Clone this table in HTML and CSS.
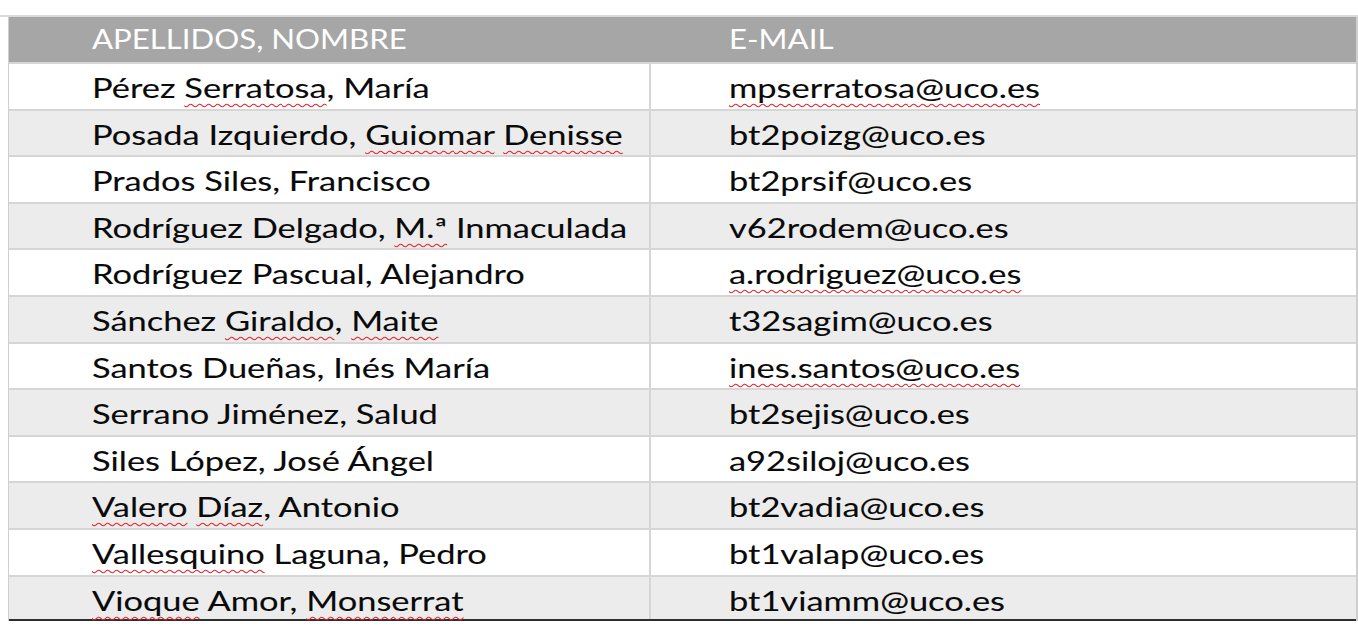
FILE: index.html
```html
<!DOCTYPE html>
<html lang="es">
<head>
<meta charset="utf-8">
<title>Listado</title>
<link rel="stylesheet" href="styles.css">
</head>
<body>
<div class="sheet">
  <div class="table">
    <div class="row head">
      <div class="cell name"><span class="txt">APELLIDOS, NOMBRE</span></div>
      <div class="cell mail"><span class="txt">E-MAIL</span></div>
    </div>
    <div class="row">
      <div class="cell name"><span class="txt">Pérez <span class="sp">Serratosa</span>, María</span></div>
      <div class="cell mail"><span class="txt"><span class="sp">mpserratosa@uco.es</span></span></div>
    </div>
    <div class="row alt">
      <div class="cell name"><span class="txt">Posada Izquierdo, <span class="sp">Guiomar</span> <span class="sp">Denisse</span></span></div>
      <div class="cell mail"><span class="txt">bt2poizg@uco.es</span></div>
    </div>
    <div class="row">
      <div class="cell name"><span class="txt">Prados Siles, Francisco</span></div>
      <div class="cell mail"><span class="txt">bt2prsif@uco.es</span></div>
    </div>
    <div class="row alt">
      <div class="cell name"><span class="txt">Rodríguez Delgado, <span class="sp">M.ª</span> Inmaculada</span></div>
      <div class="cell mail"><span class="txt">v62rodem@uco.es</span></div>
    </div>
    <div class="row">
      <div class="cell name"><span class="txt">Rodríguez Pascual, Alejandro</span></div>
      <div class="cell mail"><span class="txt"><span class="sp">a.rodriguez@uco.es</span></span></div>
    </div>
    <div class="row alt">
      <div class="cell name"><span class="txt">Sánchez <span class="sp">Giraldo</span>, <span class="sp">Maite</span></span></div>
      <div class="cell mail"><span class="txt">t32sagim@uco.es</span></div>
    </div>
    <div class="row">
      <div class="cell name"><span class="txt">Santos Dueñas, Inés María</span></div>
      <div class="cell mail"><span class="txt"><span class="sp">ines.santos@uco.es</span></span></div>
    </div>
    <div class="row alt">
      <div class="cell name"><span class="txt">Serrano Jiménez, Salud</span></div>
      <div class="cell mail"><span class="txt">bt2sejis@uco.es</span></div>
    </div>
    <div class="row">
      <div class="cell name"><span class="txt">Siles López, José Ángel</span></div>
      <div class="cell mail"><span class="txt">a92siloj@uco.es</span></div>
    </div>
    <div class="row alt">
      <div class="cell name"><span class="txt"><span class="sp">Valero</span> <span class="sp">Díaz</span>, Antonio</span></div>
      <div class="cell mail"><span class="txt">bt2vadia@uco.es</span></div>
    </div>
    <div class="row">
      <div class="cell name"><span class="txt"><span class="sp">Vallesquino</span> Laguna, Pedro</span></div>
      <div class="cell mail"><span class="txt">bt1valap@uco.es</span></div>
    </div>
    <div class="row alt last">
      <div class="cell name"><span class="txt"><span class="sp">Vioque</span> Amor, <span class="sp">Monserrat</span></span></div>
      <div class="cell mail"><span class="txt">bt1viamm@uco.es</span></div>
    </div>
  </div>
</div>
</body>
</html>
```

FILE: styles.css
```css
html, body {
  margin: 0;
  padding: 0;
  background: #ffffff;
}

body {
  font-family: Lato, "Liberation Sans", sans-serif;
  font-size: 27px;
  color: #0a0a0a;
}

.sheet {
  margin-top: 15px;
  border-top: 2px solid #d9d9d9;
}

.table {
  margin-left: 8px;
  width: 1350px;
  border-left: 1px solid #cfcfcf;
  border-right: 2px solid #cfcfcf;
  box-sizing: border-box;
  display: grid;
  grid-template-rows: 45px repeat(12, 46.6px);
}

.row {
  display: grid;
  grid-template-columns: 640px 1fr;
  box-sizing: border-box;
  border-top: 2px solid #d6d6d6;
  background: #ffffff;
}

.row.alt {
  background: #ececec;
}

.row.head {
  border-top: none;
  background: #a6a6a6;
  color: #ffffff;
}

.row.last {
  border-bottom: 2px solid #2e2e2e;
}

.cell {
  line-height: 32px;
  padding-top: 8px;
  white-space: nowrap;
}

.head .cell {
  padding-top: 6px;
}

.cell.name {
  padding-left: 83px;
}

.cell.mail {
  padding-left: 78px;
  border-left: 2px solid #d6d6d6;
}

.head .cell.mail {
  border-left: none;
  padding-left: 80px;
}

.txt {
  display: inline-block;
  transform: scaleX(1.275);
  transform-origin: left center;
  -webkit-text-stroke: 0.1px currentColor;
}

.head .txt {
  transform: scaleX(1.155);
  -webkit-text-stroke: 0;
}

.sp {
  text-decoration: underline wavy #e8202a;
  text-decoration-thickness: 1px;
  text-underline-offset: 5px;
}
```
